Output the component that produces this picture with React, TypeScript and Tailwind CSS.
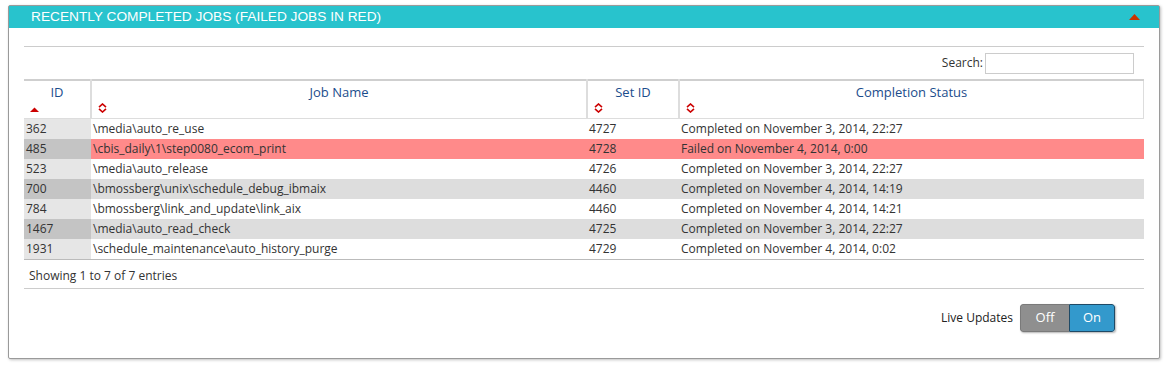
const rows = [
  { id: "362", name: "\\media\\auto_re_use", set: "4727", status: "Completed on November 3, 2014, 22:27" },
  { id: "485", name: "\\cbis_daily\\1\\step0080_ecom_print", set: "4728", status: "Failed on November 4, 2014, 0:00", failed: true },
  { id: "523", name: "\\media\\auto_release", set: "4726", status: "Completed on November 3, 2014, 22:27" },
  { id: "700", name: "\\bmossberg\\unix\\schedule_debug_ibmaix", set: "4460", status: "Completed on November 4, 2014, 14:19" },
  { id: "784", name: "\\bmossberg\\link_and_update\\link_aix", set: "4460", status: "Completed on November 4, 2014, 14:21" },
  { id: "1467", name: "\\media\\auto_read_check", set: "4725", status: "Completed on November 3, 2014, 22:27" },
  { id: "1931", name: "\\schedule_maintenance\\auto_history_purge", set: "4729", status: "Completed on November 4, 2014, 0:02" },
];

const SortBoth = () => (
  <svg width="9" height="10" viewBox="0 0 9 10" className="block">
    <path d="M1 4.2 L4.5 1 L8 4.2" fill="none" stroke="#cc0000" strokeWidth="1.6" />
    <path d="M1 5.8 L4.5 9 L8 5.8" fill="none" stroke="#cc0000" strokeWidth="1.6" />
  </svg>
);

const SortAsc = () => (
  <svg width="9" height="6" viewBox="0 0 9 6" className="block">
    <path d="M0 5 L4.5 0.5 L9 5 Z" fill="#cc0000" />
  </svg>
);

const App = () => {
  return (
    <div className="w-[1170px] h-[366px] bg-white pt-[5px] pl-[8px]" style={{ fontFamily: '"Open Sans", sans-serif' }}>
      <div className="w-[1152px] h-[354px] border border-[#9a9a9a] rounded-[2px] shadow-[1px_1px_3px_rgba(0,0,0,0.25)] bg-white">
        <div className="h-[22px] bg-[#28c3cd] flex items-center justify-between pl-[22px] pr-[19px]">
          <span className="text-white text-[13.7px] leading-none" style={{ fontFamily: '"Liberation Sans", Arial, sans-serif' }}>
            RECENTLY COMPLETED JOBS (FAILED JOBS IN RED)
          </span>
          <svg width="11" height="6" viewBox="0 0 11 6">
            <path d="M0 6 L5.5 0 L11 6 Z" fill="#cc3300" />
          </svg>
        </div>
        <div className="px-[15px] pt-[18px]">
          <div className="border-t border-[#cccccc]"></div>
          <div className="flex justify-end items-center h-[32px] gap-[2px] text-[12px] text-[#333]">
            <span>Search:</span>
            <div className="w-[149px] h-[21px] border border-[#cccccc] mr-[10px]"></div>
          </div>
          <table className="w-full border-collapse text-[12px] text-[#333]">
            <thead>
              <tr className="border-t-2 border-[#cfcfcf] border-b border-b-[#dddddd]">
                <th className="w-[67px] h-[38px] align-top font-normal text-[13px] text-[#1b4d8c] pt-[3px] px-[6px] border-r-2 border-[#dddddd]">
                  <div className="text-center leading-[16px]">ID</div>
                  <div className="mt-[7px]"><SortAsc /></div>
                </th>
                <th className="w-[496px] align-top font-normal text-[13px] text-[#1b4d8c] pt-[3px] px-[6px] border-r-2 border-[#dddddd]">
                  <div className="text-center leading-[16px]">Job Name</div>
                  <div className="mt-[3px]"><SortBoth /></div>
                </th>
                <th className="w-[92px] align-top font-normal text-[13px] text-[#1b4d8c] pt-[3px] px-[6px] border-r-2 border-[#dddddd]">
                  <div className="text-center leading-[16px]">Set ID</div>
                  <div className="mt-[3px]"><SortBoth /></div>
                </th>
                <th className="align-top font-normal text-[13px] text-[#1b4d8c] pt-[3px] px-[6px] border-r border-[#dddddd]">
                  <div className="text-center leading-[16px]">Completion Status</div>
                  <div className="mt-[3px]"><SortBoth /></div>
                </th>
              </tr>
            </thead>
            <tbody>
              {rows.map((r, i) => {
                const odd = i % 2 === 1;
                const rowBg = r.failed ? "bg-[#ff8a8a]" : odd ? "bg-[#dddddd]" : "bg-white";
                const idBg = odd ? "bg-[#c4c4c4]" : "bg-[#e6e6e6]";
                return (
                  <tr key={r.id} className={`h-[20px] ${rowBg}`}>
                    <td className={`${idBg} pl-[2px] leading-[20px]`}>{r.id}</td>
                    <td className="pl-[2px] leading-[20px]">{r.name}</td>
                    <td className="pl-[2px] leading-[20px]">{r.set}</td>
                    <td className="pl-[2px] leading-[20px]">{r.status}</td>
                  </tr>
                );
              })}
            </tbody>
          </table>
          <div className="border-t border-[#bbbbbb]"></div>
          <div className="h-[28px] flex items-center pt-[5px] pl-[5px] text-[12px] text-[#333]">Showing 1 to 7 of 7 entries</div>
          <div className="border-t border-[#cccccc]"></div>
          <div className="flex justify-end items-center mt-[15px] pr-[29px] text-[12px] text-[#222]">
            <span className="mr-[7px]">Live Updates</span>
            <div className="flex h-[28px] rounded-[3px] overflow-hidden shadow-[1px_1px_2px_rgba(0,0,0,0.3)]">
              <div className="w-[49px] bg-[#8f8f8f] border border-[#7a7a7a] border-r-0 rounded-l-[3px] text-white text-[13px] flex items-center justify-center">Off</div>
              <div className="w-[46px] bg-[#3399cc] border border-[#1f4a66] rounded-r-[3px] text-white text-[13px] flex items-center justify-center">On</div>
            </div>
          </div>
        </div>
      </div>
    </div>
  );
};

export default App;
